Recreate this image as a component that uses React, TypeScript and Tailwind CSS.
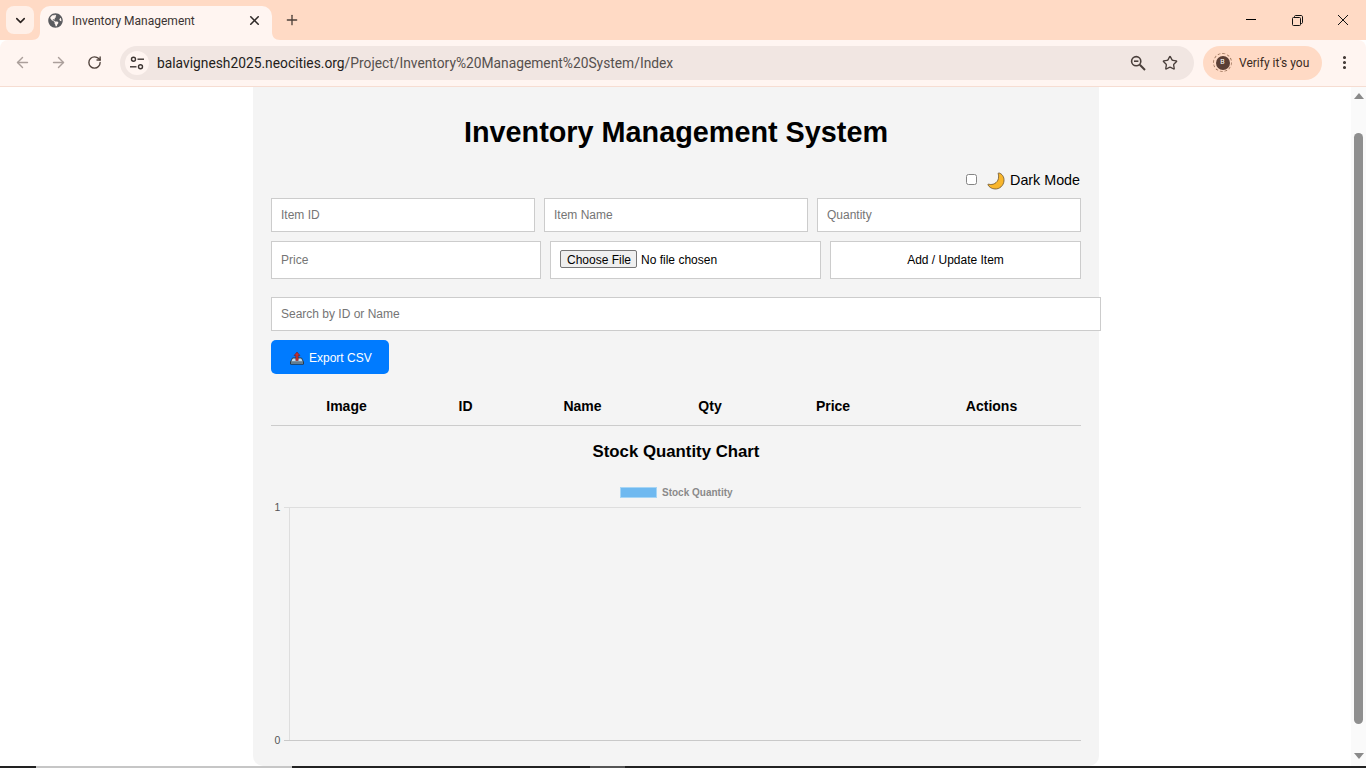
import { ArrowLeft, ArrowRight, ChevronDown, EllipsisVertical, Plus, RotateCw, Star, X } from "lucide-react";
import { FaGlobeAmericas } from "react-icons/fa";

const inputCls =
  "h-full w-full border border-[#cccccc] bg-white px-[9px] text-[12px] text-black outline-none placeholder:text-[#757575]";

function TabFlare({ side }: { side: "left" | "right" }) {
  const d = side === "left" ? "M8 0V8H0C5 8 8 5 8 0Z" : "M0 0V8H8C3 8 0 5 0 0Z";
  return (
    <svg
      width="8"
      height="8"
      viewBox="0 0 8 8"
      className={side === "left" ? "absolute -left-2 bottom-0" : "absolute -right-2 bottom-0"}
    >
      <path d={d} fill="#fff5f1" />
    </svg>
  );
}

function SiteInfoIcon() {
  return (
    <svg width="16" height="16" viewBox="0 0 16 16" fill="none" stroke="#3d3532" strokeWidth="1.4">
      <circle cx="4.5" cy="4.2" r="2" />
      <path d="M8.5 4.2H15" />
      <circle cx="11.5" cy="11.8" r="2" />
      <path d="M1 11.8H7.5" />
    </svg>
  );
}

function ZoomIcon() {
  return (
    <svg width="16" height="16" viewBox="0 0 16 16" fill="none" stroke="#4a3f3b" strokeWidth="1.6" className="mr-[16px]">
      <circle cx="6.2" cy="6.2" r="4.6" />
      <path d="M4 6.2H8.4" />
      <path d="M9.8 9.8L15 15" strokeWidth="2" />
    </svg>
  );
}

function MoonIcon() {
  return (
    <svg width="18" height="18" viewBox="0 0 18 18">
      <path
        d="M12 0.9C15 1.8 17.4 4.8 17 9C16.5 13.8 12.5 17.2 8 17C4.8 16.9 2.2 15.2 0.9 12.8C0.8 12.2 1.2 12 1.8 12.2C5.8 13.4 10.4 11 11.4 6.6C11.8 4.8 11.7 3 11.2 1.6C11.1 1 11.5 0.8 12 0.9Z"
        fill="#f8b62d"
        stroke="#5b4420"
        strokeWidth="0.7"
      />
    </svg>
  );
}

function OutboxIcon() {
  return (
    <svg width="14" height="14" viewBox="0 0 14 14" className="shrink-0">
      <path d="M2.5 7H11.5L13.5 11V13H0.5V11Z" fill="#bcdcf2" stroke="#26343f" strokeWidth="0.9" />
      <path d="M0.5 11H13.5V13H0.5Z" fill="#8fb9d8" stroke="#26343f" strokeWidth="0.9" />
      <path d="M7 1L10 4.6H8.2V9.5H5.8V4.6H4Z" fill="#c22f2f" stroke="#6f1414" strokeWidth="0.5" />
    </svg>
  );
}

function TabBar() {
  return (
    <div className="flex h-10 shrink-0 items-end bg-[#ffdac5]">
      <div className="mb-[6px] ml-[6px] flex h-7 w-7 items-center justify-center rounded-lg bg-[#fff0e8]">
        <ChevronDown size={15} strokeWidth={2.5} color="#2b2320" />
      </div>
      <div className="relative ml-[6px] flex h-[34px] w-[232px] items-center rounded-t-[10px] bg-[#fff5f1] pb-[5px] pl-2 pr-[10px]">
        <TabFlare side="left" />
        <FaGlobeAmericas size={15} color="#5b5b5f" />
        <span className="ml-[9px] flex-1 whitespace-nowrap text-[12px] text-[#3c3431]">
          Inventory Management
        </span>
        <X size={15} strokeWidth={2.5} color="#2f2a28" />
        <TabFlare side="right" />
      </div>
      <div className="mb-[12px] ml-[12px] flex h-4 w-4 items-center justify-center">
        <Plus size={16} strokeWidth={2} color="#4c3f39" />
      </div>
      <div className="flex-1" />
      <div className="flex h-10 items-center">
        <div className="flex w-[46px] justify-center pb-[2px]">
          <div className="h-px w-[10px] bg-black" />
        </div>
        <div className="flex w-[46px] justify-center">
          <svg width="11" height="11" viewBox="0 0 11 11" fill="none" stroke="#111" strokeWidth="1">
            <rect x="0.5" y="2.5" width="8" height="8" rx="1" />
            <path d="M2.5 2.5V1.5C2.5 1 3 0.5 3.5 0.5H9C10 0.5 10.5 1 10.5 2V7.5C10.5 8 10 8.5 9.5 8.5H8.5" />
          </svg>
        </div>
        <div className="flex w-[46px] justify-center">
          <svg width="12" height="12" viewBox="0 0 12 12" stroke="#111" strokeWidth="1">
            <path d="M1 1L11 11M11 1L1 11" />
          </svg>
        </div>
      </div>
    </div>
  );
}

function Toolbar() {
  return (
    <div className="flex h-[47px] shrink-0 items-center rounded-t-lg border-b border-[#f6ddd2] bg-[#fff5f1] pb-px">
      <div className="flex w-[120px] items-center">
        <ArrowLeft size={17} className="ml-[14px]" color="#ab9f9b" strokeWidth={2} />
        <ArrowRight size={17} className="ml-[19px]" color="#ab9f9b" strokeWidth={2} />
        <RotateCw size={15} className="ml-[20px]" color="#51433d" strokeWidth={2.2} />
      </div>
      <div className="flex h-[34px] w-[1074px] items-center rounded-full bg-[#f1e6e2] pl-[5px]">
        <div className="flex h-6 w-6 items-center justify-center rounded-full bg-[#fff5f1]">
          <SiteInfoIcon />
        </div>
        <div className="ml-2 flex-1 whitespace-nowrap pt-px text-[13.8px] text-[#56504e]">
          <span className="text-[#231d1b]">balavignesh2025.neocities.org</span>/Project/Inventory%20Management%20System/Index
        </div>
        <ZoomIcon />
        <Star size={16} color="#4a3f3b" strokeWidth={2} className="mr-[16px]" />
      </div>
      <div className="ml-[9px] flex h-[34px] w-[119px] items-center rounded-full bg-[#ffdac5] pl-[10px]">
        <div className="flex h-[19px] w-[19px] items-center justify-center rounded-full border border-dashed border-[#a0785f]">
          <div className="flex h-[14px] w-[14px] items-center justify-center rounded-full bg-[#5b3f35] text-[7px] text-white">
            B
          </div>
        </div>
        <span className="ml-[7px] whitespace-nowrap text-[12px] text-[#3a2a22]">Verify it's you</span>
      </div>
      <EllipsisVertical size={17} color="#3f3531" strokeWidth={2.4} className="ml-[14px]" />
    </div>
  );
}

function Chart() {
  return (
    <svg width="810" height="285" viewBox="0 0 810 285" className="mt-[16px] block" fontFamily="'Liberation Sans', sans-serif">
      <rect x="349.5" y="9.5" width="36" height="10" fill="#6fb9f0" stroke="#a6d5f5" />
      <text x="391" y="17.5" fontSize="10" fontWeight="700" fill="#8a8a8a">Stock Quantity</text>
      <path d="M13 29.5H810" stroke="#dedede" />
      <path d="M18.5 29V263" stroke="#dedede" />
      <path d="M13 262.5H810" stroke="#c9c9c9" />
      <text x="3.5" y="33" fontSize="10.5" fill="#555">1</text>
      <text x="3.5" y="266" fontSize="10.5" fill="#555">0</text>
    </svg>
  );
}

function Card() {
  const cols: [string, string][] = [
    ["Image", "w-[151px]"],
    ["ID", "w-[87px]"],
    ["Name", "w-[147px]"],
    ["Qty", "w-[108px]"],
    ["Price", "w-[138px]"],
    ["Actions", "w-[179px]"],
  ];
  return (
    <div className="flex h-[679px] w-[846px] flex-col overflow-visible rounded-b-[10px] bg-[#f4f4f4] px-[18px] text-black">
      <h1 className="mt-[27px] h-[37px] text-center text-[28.8px] font-bold leading-[37px]">
        Inventory Management System
      </h1>
      <div className="mt-[20px] flex h-[20px] items-center justify-end pr-px">
        <input
          type="checkbox"
          className="mb-[3px] h-[11px] w-[11px] appearance-none rounded-[2.5px] border border-[#858585] bg-white"
        />
        <span className="ml-[10px]">
          <MoonIcon />
        </span>
        <span className="ml-[5px] text-[14.3px]">Dark Mode</span>
      </div>
      <div className="mt-[7px] flex h-[34px] gap-[9px]">
        <input className={inputCls} placeholder="Item ID" />
        <input className={inputCls} placeholder="Item Name" />
        <input className={inputCls} placeholder="Quantity" />
      </div>
      <div className="mt-[9px] flex h-[38px] gap-[9px]">
        <div className="w-[270px] shrink-0">
          <input className={inputCls} placeholder="Price" />
        </div>
        <div className="flex w-[271px] shrink-0 items-center border border-[#cccccc] bg-white pb-px pl-[9px]">
          <input
            type="file"
            className="w-full text-[12px] text-black file:mr-[4px] file:h-[18px] file:rounded-[2px] file:border file:border-solid file:border-[#767676] file:bg-[#efefef] file:pl-[6px] file:pr-[5px] file:text-[12px] file:text-black"
          />
        </div>
        <div className="flex flex-1 items-center justify-center border border-[#cccccc] bg-white text-[12px]">
          Add / Update Item
        </div>
      </div>
      <div className="mt-[18px] h-[34px] w-[830px] shrink-0">
        <input className={inputCls} placeholder="Search by ID or Name" />
      </div>
      <div className="mt-[9px] flex h-[34px] w-[118px] items-center gap-[5px] rounded-[5px] bg-[#007bff] pl-[19px] pt-px text-[12px] text-white">
        <OutboxIcon />
        Export CSV
      </div>
      <div className="mt-[16px] flex h-[36px] items-center border-b border-[#cccccc] pb-[2px] text-[14px] font-bold">
        {cols.map(([label, w]) => (
          <div key={label} className={`${w} text-center`}>
            {label}
          </div>
        ))}
      </div>
      <h3 className="mt-[16px] h-[20px] text-center text-[16.8px] font-bold leading-[20px]">Stock Quantity Chart</h3>
      <Chart />
    </div>
  );
}

function Scrollbar() {
  return (
    <div className="flex w-[15px] shrink-0 flex-col items-center bg-[#fafafa]">
      <svg width="10" height="6" viewBox="0 0 10 6" className="mt-[6px]">
        <path d="M5 0L10 6H0Z" fill="#8a8a8a" />
      </svg>
      <div className="mt-[34px] h-[591px] w-[9px] rounded-full bg-[#8f8f8f]" />
      <svg width="10" height="6" viewBox="0 0 10 6" className="mt-[29px]">
        <path d="M5 6L10 0H0Z" fill="#8a8a8a" />
      </svg>
    </div>
  );
}

function Taskbar() {
  return (
    <div className="flex h-[2px] shrink-0 bg-[#222222]">
      <div className="ml-[36px] w-[256px] bg-[#c6c6c6]" />
      <div className="ml-[298px] w-[35px] bg-[#555555]" />
    </div>
  );
}

export default function App() {
  return (
    <div className="flex h-[768px] w-[1366px] flex-col overflow-hidden bg-white font-['Liberation_Sans',Arial,sans-serif]">
      <div className="font-['Roboto',sans-serif]">
        <TabBar />
        <Toolbar />
      </div>
      <div className="flex min-h-0 flex-1">
        <div className="flex flex-1 pl-[253px]">
          <Card />
        </div>
        <Scrollbar />
      </div>
      <Taskbar />
    </div>
  );
}
